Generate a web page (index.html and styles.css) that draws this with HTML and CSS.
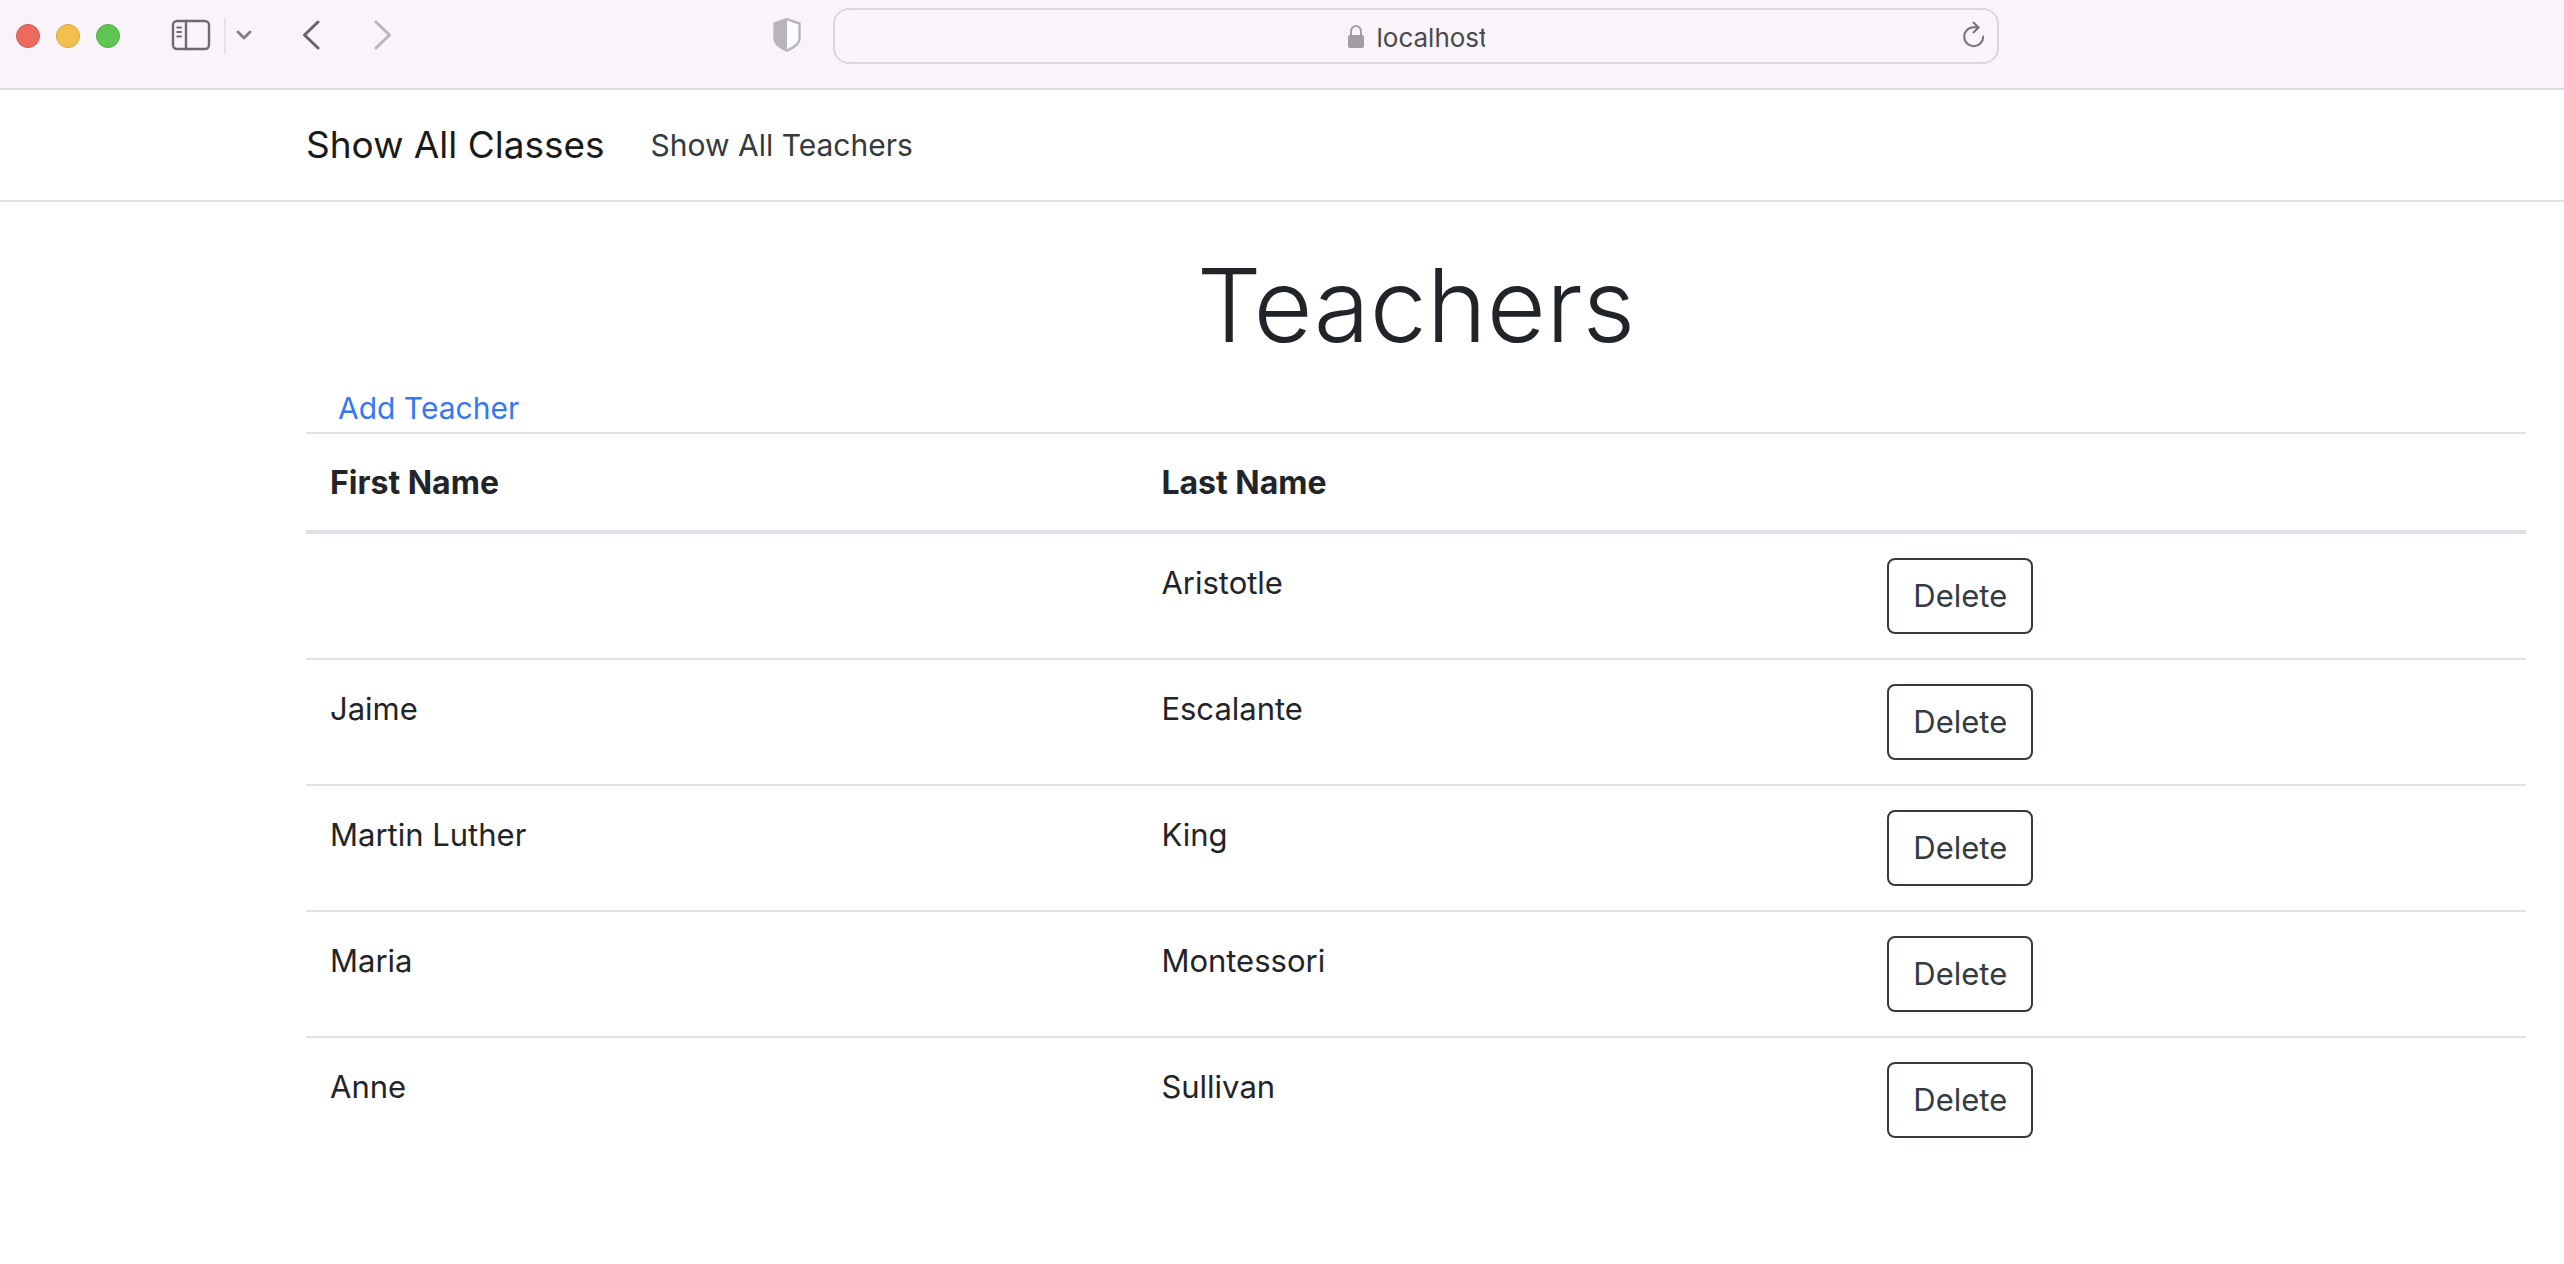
FILE: index.html
```html
<!DOCTYPE html>
<html lang="en">
<head>
<meta charset="utf-8">
<title>Teachers</title>
<link rel="stylesheet" href="styles.css">
</head>
<body>
<header class="chrome">
  <div class="chrome-left">
    <div class="lights"><span class="light red"></span><span class="light yellow"></span><span class="light green"></span></div>
    <button class="icon-btn sidebar" aria-label="Show sidebar">
      <svg width="40" height="32" viewBox="0 0 40 32" fill="none" stroke="#6e6a71" stroke-linecap="round"><rect x="2" y="2" width="36" height="28" rx="4" stroke-width="2.4"/><path d="M15 2v28" stroke-width="2.4"/><path d="M6.200 8.500h4M6.200 13h4M6.200 17.500h4" stroke-width="1.800"/></svg>
    </button>
    <span class="divider"></span>
    <button class="icon-btn chevron" aria-label="Tab groups">
      <svg width="16" height="12" viewBox="0 0 16 12" fill="none" stroke="#817d86" stroke-width="2.800" stroke-linecap="round" stroke-linejoin="round"><path d="M2 3l6 6 6-6"/></svg>
    </button>
    <button class="icon-btn back" aria-label="Back">
      <svg width="18" height="30" viewBox="0 0 18 30" fill="none" stroke="#68636b" stroke-width="3" stroke-linecap="round" stroke-linejoin="round"><path d="M16 2L2.500 15L16 28"/></svg>
    </button>
    <button class="icon-btn forward" aria-label="Forward">
      <svg width="18" height="30" viewBox="0 0 18 30" fill="none" stroke="#b9b5bc" stroke-width="3" stroke-linecap="round" stroke-linejoin="round"><path d="M2 2l13.500 13L2 28"/></svg>
    </button>
    <button class="icon-btn shield" aria-label="Privacy report">
      <svg width="28" height="34" viewBox="0 0 28 34"><path d="M14 1.200L26.500 5.500V21c0 5-5.500 8.500-12.500 11.700C7 29.500 1.500 26 1.500 21V5.500z" fill="none" stroke="#b8b4bb" stroke-width="2.400" stroke-linejoin="round"/><path d="M14 1.200L1.500 5.500V21C1.500 26 7 29.500 14 32.700z" fill="#b8b4bb"/><path d="M14.500 3.500L25 7v14c0 3.500-5 6.500-10.500 9z" fill="#fefcff"/></svg>
    </button>
  </div>
  <div class="address">
    <svg class="lock" width="16" height="24" viewBox="0 0 16 24"><rect y="10" width="16" height="13" rx="2" fill="#a19da3"/><path d="M3 11V6.500a5 5.500 0 0 1 10 0V11" fill="none" stroke="#a19da3" stroke-width="2"/></svg>
    <input class="url" type="text" value="localhost" aria-label="Address">
    <button class="icon-btn reload" aria-label="Reload">
      <svg width="22" height="28" viewBox="0 0 22 28" fill="none" stroke="#767278" stroke-width="2" stroke-linecap="round" stroke-linejoin="round"><path d="M20.200 15.500A9.500 9.500 0 1 1 10.700 6.200h4.800"/><path d="M10.500 1.500l5 5-5 5"/></svg>
    </button>
  </div>
</header>
<nav class="navbar">
  <a class="brand" href="#">Show All Classes</a>
  <a class="nav-link" href="#">Show All Teachers</a>
</nav>
<main class="content">
  <h1 class="title">Teachers</h1>
  <a class="add" href="#">Add Teacher</a>
  <table class="table">
    <colgroup><col class="col-first"><col class="col-last"><col></colgroup>
    <thead><tr><th scope="col">First Name</th><th scope="col">Last Name</th><th></th></tr></thead>
    <tbody>
      <tr><td></td><td>Aristotle</td><td><button class="btn">Delete</button></td></tr>
      <tr><td>Jaime</td><td>Escalante</td><td><button class="btn">Delete</button></td></tr>
      <tr><td>Martin Luther</td><td>King</td><td><button class="btn">Delete</button></td></tr>
      <tr><td>Maria</td><td>Montessori</td><td><button class="btn">Delete</button></td></tr>
      <tr><td>Anne</td><td>Sullivan</td><td><button class="btn">Delete</button></td></tr>
    </tbody>
  </table>
</main>
</body>
</html>
```
FILE: styles.css
```css
* { box-sizing: border-box; }

body {
  margin: 0;
  background: #fff;
  color: #212529;
  font-family: Inter, "Liberation Sans", sans-serif;
  font-size: 31px;
  line-height: 50px;
}

a { text-decoration: none; }

/* Browser toolbar */
.chrome {
  display: grid;
  grid-template-columns: 833fr 1166fr 565fr;
  align-items: start;
  height: 90px;
  padding-top: 8px;
  background: #f8f4fa;
  border-bottom: 2px solid #dedbe0;
}

.chrome-left {
  display: flex;
  align-items: center;
  height: 56px;
  padding: 0 32px 0 16px;
}

.lights { display: flex; gap: 16px; }

.light {
  width: 24px;
  height: 24px;
  border: 1px solid;
  border-radius: 50%;
}

.red { background: #ed6a5e; border-color: #d8584e; }
.yellow { background: #f5bf4f; border-color: #dba33c; }
.green { background: #61c554; border-color: #50ad43; }

.icon-btn {
  display: flex;
  padding: 0 0 2px;
  border: 0;
  background: none;
}

.sidebar { margin-left: 51px; }
.divider { width: 2px; height: 36px; margin-left: 13px; background: #e7e3e9; }
.chevron { margin-left: 10px; }
.back { margin-left: 50px; }
.forward { margin-left: 54px; }
.shield { margin-left: auto; }

.address {
  position: relative;
  display: flex;
  align-items: center;
  justify-content: center;
  gap: 13px;
  height: 56px;
  border: 2px solid #dad6dc;
  border-radius: 16px;
}

.lock { margin-top: 2px; }

.url {
  width: 108px;
  height: 40px;
  padding: 2px 0 0;
  border: 0;
  background: none;
  color: #4b494c;
  font: 26px Inter, "Liberation Sans", sans-serif;
}

.reload { position: absolute; right: 12px; }

/* Site navigation */
.navbar {
  display: flex;
  align-items: center;
  gap: 46px;
  height: 112px;
  padding: 0 38px 0 306px;
  border-bottom: 2px solid #dee2e6;
}

.brand { color: #1a1a1a; font-size: 37px; }
.nav-link { color: #343a40; font-size: 30px; }

/* Teachers list */
.content { padding: 36px 38px 32px 306px; }

.title {
  margin: 0 0 12px;
  font-size: 102px;
  font-weight: 300;
  line-height: 134px;
  text-align: center;
}

.add {
  display: block;
  width: fit-content;
  margin-left: 32px;
  color: #3478f6;
  font-size: 30px;
  line-height: 48px;
}

.table {
  width: 100%;
  table-layout: fixed;
  border-collapse: separate;
  border-spacing: 0;
}

.col-first { width: 37.45%; }
.col-last { width: 32.7%; }

.table th,
.table td {
  padding: 24px;
  border-top: 2px solid #dee2e6;
  text-align: left;
  vertical-align: top;
}

.table th {
  padding-bottom: 22px;
  border-bottom: 4px solid #dee2e6;
  font-size: 32px;
  font-weight: 700;
}

.table tbody tr:first-child td { border-top: 0; }

.btn {
  display: block;
  height: 76px;
  padding: 0 24px;
  border: 2px solid #343a40;
  border-radius: 8px;
  background: #fff;
  color: #343a40;
  font: inherit;
}
```
